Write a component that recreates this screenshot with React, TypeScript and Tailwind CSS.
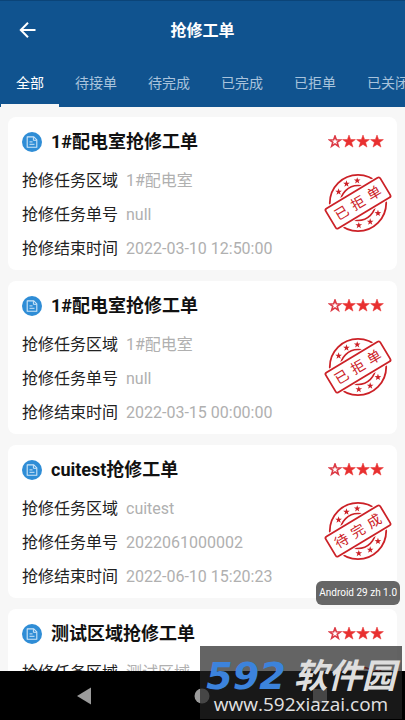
import { useState } from 'react'

const tabs = ['全部', '待接单', '待完成', '已完成', '已拒单', '已关闭']

const orders = [
  { name: '1#配电室抢修工单', area: '1#配电室', no: 'null', end: '2022-03-10 12:50:00', status: '已拒单' },
  { name: '1#配电室抢修工单', area: '1#配电室', no: 'null', end: '2022-03-15 00:00:00', status: '已拒单' },
  { name: 'cuitest抢修工单', area: 'cuitest', no: '2022061000002', end: '2022-06-10 15:20:23', status: '待完成' },
  { name: '测试区域抢修工单', area: '测试区域', no: '2022061000001', end: '2022-06-10 15:12:40', status: '待完成' },
]

type Order = (typeof orders)[number]

const STAR = 'M0 -6.6 L1.6 -2.1 L6.4 -2 L2.6 0.9 L4 5.5 L0 2.8 L-4 5.5 L-2.6 0.9 L-6.4 -2 L-1.6 -2.1 Z'

function DocIcon() {
  return (
    <svg className="size-5 shrink-0" viewBox="0 0 20 20" fill="none" aria-hidden="true">
      <circle cx="10" cy="10" r="10" fill="#2f8dd6" />
      <path d="M5.2 4.9h6.6l3 3v7.4H5.2z" stroke="#cfe6f8" strokeWidth="1.1" strokeLinejoin="round" />
      <path d="M11.4 5.1v3.2h3.2M7.5 9.9h3M7.5 12.3h5" stroke="#cfe6f8" strokeWidth="1" />
    </svg>
  )
}

function Rating() {
  return (
    <svg className="h-[14px] w-14 shrink-0" viewBox="0 0 56 14" aria-hidden="true">
      <path d={STAR} transform="translate(7 6.6) scale(.84)" fill="#fff" stroke="#dc3a45" strokeWidth="1.9" />
      {[21, 35, 49].map((x) => (
        <path key={x} d={STAR} transform={`translate(${x} 6.6)`} fill="#e83030" stroke="#e83030" strokeWidth=".5" />
      ))}
    </svg>
  )
}

function Stamp({ label }: { label: string }) {
  return (
    <svg className="h-15 w-[70px] shrink-0" viewBox="-35 -30 70 60" fill="none" role="img" aria-label={label}>
      <g stroke="#cc2127">
        <circle r="28.2" strokeWidth="1.8" />
        <circle r="17.5" strokeWidth="1.6" />
      </g>
      {[-150, -121, -92, 27, 57, 88].map((deg) => (
        <path key={deg} d={STAR} transform={`rotate(${deg}) translate(22.4 0) rotate(${-deg}) scale(.52)`} fill="#cc2127" />
      ))}
      <g transform="rotate(-31)">
        <rect x="-33.5" y="-13.5" width="67" height="27" fill="#fff" />
        <rect x="-31.8" y="-11.6" width="63.6" height="23.2" rx="2" fill="#fff" stroke="#cc2127" strokeWidth="1.8" />
        <text x="-19 0 19" y="5" fontSize="14" textAnchor="middle" fill="#cc2127">
          {label}
        </text>
      </g>
    </svg>
  )
}

function OrderCard({ order }: { order: Order }) {
  const rows = [
    ['抢修任务区域', order.area],
    ['抢修任务单号', order.no],
    ['抢修结束时间', order.end],
  ]

  return (
    <article className="rounded-lg bg-white pt-3 pb-[3px]">
      <div className="flex items-center justify-between pr-[13px] pl-[14px]">
        <div className="flex items-center gap-[9px]">
          <DocIcon />
          <h2 className="text-lg leading-[26px] font-bold text-[#111]">{order.name}</h2>
        </div>
        <Rating />
      </div>
      <div className="mt-[10px] flex items-start justify-between pr-1 pl-[14px]">
        <dl>
          {rows.map(([label, value]) => (
            <div key={label} className="flex h-[34px] gap-2 text-base leading-8">
              <dt className="text-[#222]">{label}</dt>
              <dd className="text-[#b0b0b0]">{value}</dd>
            </div>
          ))}
        </dl>
        <div className="pt-2">
          <Stamp label={order.status} />
        </div>
      </div>
    </article>
  )
}

export default function App() {
  const [active, setActive] = useState(0)

  return (
    <div className="relative flex h-screen flex-col overflow-hidden bg-[#f7f7f7] font-[Roboto,'Noto_Sans_CJK_SC',sans-serif]" lang="zh-CN">
      <header className="shrink-0 border-t border-[#0b4478] bg-[#10538f] text-white">
        <div className="relative flex h-[60px] items-center justify-center">
          <button className="absolute left-[18px]" aria-label="返回">
            <svg className="size-5" viewBox="0 0 20 20" fill="none" stroke="currentColor" strokeWidth="2" aria-hidden="true">
              <path d="M17.5 9H3M10 1.8L2.8 9l7.2 7.2" />
            </svg>
          </button>
          <h1 className="text-base font-bold">抢修工单</h1>
        </div>
        <nav className="flex gap-px overflow-hidden pl-px">
          {tabs.map((tab, i) => (
            <button
              key={tab}
              className={
                i === active
                  ? 'h-[46px] shrink-0 border-b-3 border-[#f7f7f7] px-[15px] text-sm text-white'
                  : 'h-[46px] shrink-0 border-b-3 border-transparent px-[15px] text-sm text-[#a9c3dc]'
              }
              onClick={() => setActive(i)}
            >
              {tab}
            </button>
          ))}
        </nav>
      </header>

      <main className="flex min-h-0 flex-1 flex-col gap-[11px] overflow-hidden px-2 pt-[10px]">
        {orders.map((order, i) => (
          <OrderCard key={i} order={order} />
        ))}
      </main>

      <footer className="flex h-[49px] shrink-0 items-center justify-around bg-black px-[26px]">
        <button aria-label="后退">
          <svg className="size-5" viewBox="0 0 20 20" fill="#9b9b9b" aria-hidden="true">
            <path d="M16 1.5v17L2 10z" />
          </svg>
        </button>
        <button aria-label="主页">
          <svg className="size-5" viewBox="0 0 20 20" fill="#9b9b9b" aria-hidden="true">
            <circle cx="10" cy="10" r="7.5" />
          </svg>
        </button>
        <button aria-label="最近任务">
          <svg className="size-5" viewBox="0 0 20 20" fill="#9b9b9b" aria-hidden="true">
            <path d="M3 3h14v14H3z" />
          </svg>
        </button>
      </footer>

      <div className="absolute right-[5px] bottom-[115px] rounded-md bg-[#666] px-[3px] text-[10px] leading-6 text-white">
        Android 29 zh 1.0
      </div>

      <div className="absolute right-[3px] bottom-px flex h-[73px] w-[202px] flex-col items-center bg-[#222]/70 pt-3">
        <div className="flex h-9 items-center gap-2 font-bold italic">
          <span className="font-['DejaVu_Sans',sans-serif] text-[38px] leading-9 text-[#3c83dc]">592</span>
          <span className="text-[34px] leading-9 text-[#dedede]">软件园</span>
        </div>
        <span className="font-['Open_Sans',sans-serif] text-[19px] leading-5 font-medium text-[#e2e2e2]">www.592xiazai.com</span>
      </div>
    </div>
  )
}
